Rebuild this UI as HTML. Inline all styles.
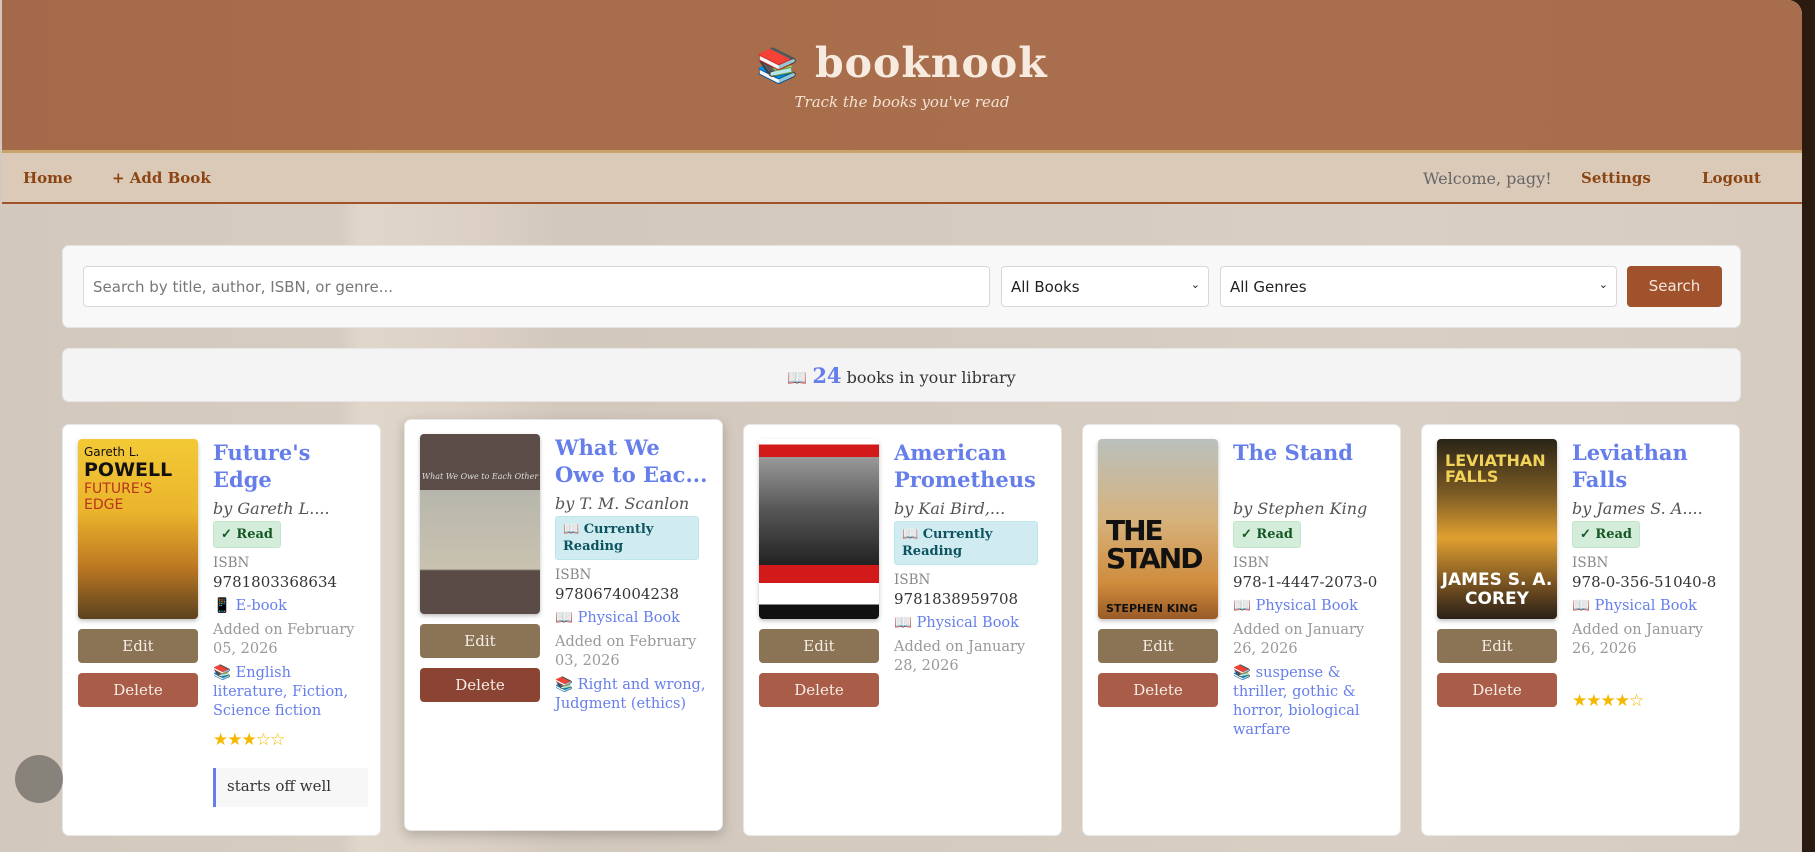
<!DOCTYPE html>
<html><head><meta charset="utf-8"><style>
*{box-sizing:border-box;margin:0;padding:0}
html,body{width:1815px;height:852px;overflow:hidden}
body{background:#2a1a10;font-family:"DejaVu Serif",serif;position:relative}
.page{position:absolute;left:0;top:0;width:1802px;height:852px;border-radius:0 14px 0 0;overflow:hidden;
background:linear-gradient(90deg,#d2c8bd 0,#d6ccc1 340px,#e0d6ca 360px,#dbd0c3 480px,#d3c8bc 560px,#d5cbc0 1000px,#d9cfc4 1400px,#d6ccc2 1802px)}
.header{position:absolute;left:2px;top:0;width:1800px;height:150px;background:linear-gradient(90deg,#a4694a,#a86d4c 400px,#a86e4d 1200px,#a86d4d);border-radius:0 14px 0 0}
.goldline{position:absolute;left:2px;top:150px;width:1800px;height:3px;background:#c9a468}
.logo{position:absolute;left:0;width:1804px;top:38px;text-align:center;color:#f7ebdf;font-weight:bold;font-size:41px;line-height:50px;letter-spacing:1px}
.sub{position:absolute;left:0;width:1804px;top:93px;text-align:center;color:#f3e3d3;font-style:italic;font-size:15px}
.nav{position:absolute;left:2px;top:153px;width:1800px;height:51px;background:#dccab9;border-bottom:2px solid #a0522d}
.nav span{position:absolute;top:16px;font-size:15px;font-weight:bold;color:#8b4513}
.panel{position:absolute;left:62px;width:1679px;border-radius:7px;border:1px solid #e5e5e5}
.search{top:245px;height:83px;background:#f8f8f8}
.inp{position:absolute;top:20px;height:41px;background:#fff;border:1px solid #d8d8d8;border-radius:4px;font-family:"DejaVu Sans",sans-serif;font-size:15px;padding:11px 9px;color:#222}
.stats{top:348px;height:54px;background:#f4f4f4;text-align:center;font-size:16px;line-height:54px;color:#333}
.card{position:absolute;top:424px;width:319px;height:412px;background:#fff;border-radius:7px;border:1px solid #e6e6e6}
.cover{position:absolute;left:15px;top:14px;width:120px;height:180px;border-radius:4px;overflow:hidden;box-shadow:0 2px 4px rgba(0,0,0,.25)}
.btn{position:absolute;left:15px;width:120px;height:34px;border-radius:4px;color:#f6eee6;font-size:15px;text-align:center;line-height:34px}
.edit{top:204px;background:#8b7355}.del{top:248px;background:#a95c48}
.info{position:absolute;left:150px;top:14px;width:152px}
.t{font-weight:bold;color:#667eea;font-size:21px;line-height:27px;height:56px;overflow:hidden;width:148px}
.a{font-style:italic;color:#555;font-size:16px;line-height:20px;white-space:nowrap;margin-top:4px}
.badge{display:inline-block;font-weight:bold;font-size:13px;line-height:17px;padding:4px 7px;border-radius:3px;margin-top:2px}
.rd{background:#d4edda;color:#155724;border:1px solid #c3e6cb}
.cr{background:#d1ecf1;color:#0c5460;border:1px solid #bee5eb;width:144px}
.l{color:#888;font-size:13.5px;margin-top:7px;line-height:17px}
.n{color:#333;font-size:15px;line-height:20px}
.f{color:#667eea;font-size:14.5px;line-height:20px;margin-top:4px}
.d{color:#999;font-size:14.5px;line-height:19px;margin-top:5px}
.g{color:#667eea;font-size:14.5px;line-height:19px;margin-top:5px}
.s{color:#f5b800;font-size:17px;margin-top:9px;letter-spacing:-1px}
.note{margin-top:18px;background:#f7f7f7;border-left:3px solid #667eea;padding:9px 11px;font-size:15px;color:#333;height:39px;width:155px}
</style></head><body>
<div class="page">
<div class="header"></div>
<div class="goldline"></div>
<div class="logo"><span style="font-family:'DejaVu Sans';font-size:34px">📚</span> booknook</div>
<div class="sub">Track the books you've read</div>
<div class="nav">
<span style="left:21px">Home</span><span style="left:110px">+ Add Book</span>
<span style="left:1421px;font-weight:normal;color:#666;font-size:16px">Welcome, pagy!</span>
<span style="left:1579px">Settings</span><span style="left:1700px">Logout</span>
</div>
<div class="panel search">
<div class="inp" style="left:20px;width:907px;color:#777">Search by title, author, ISBN, or genre...</div>
<div class="inp" style="left:938px;width:208px">All Books<span style="position:absolute;right:8px;font-size:11px">⌄</span></div>
<div class="inp" style="left:1157px;width:397px">All Genres<span style="position:absolute;right:8px;font-size:11px">⌄</span></div>
<div style="position:absolute;left:1564px;top:20px;width:95px;height:41px;background:#a0522d;border-radius:4px;color:#f4e6dc;font-family:'DejaVu Sans',sans-serif;font-size:15px;text-align:center;line-height:41px">Search</div>
</div>
<div class="panel stats">📖 <b style="color:#667eea;font-size:21px">24</b> books in your library</div>

<div class="card" style="left:62px">
<div class="cover" style="background:linear-gradient(180deg,#f3c935 0,#eab52c 40%,#c07a22 70%,#5a4220 100%)"><div style="padding:6px 6px;font-family:'DejaVu Sans';font-size:12px;color:#111;line-height:14px">Gareth L.<br><b style="font-size:19px;line-height:22px">POWELL</b><br><span style="color:#b8341e;font-size:14px;line-height:16px">FUTURE'S<br>EDGE</span></div></div>
<div class="btn edit">Edit</div><div class="btn del">Delete</div>
<div class="info"><div class="t">Future's<br>Edge</div><div class="a">by Gareth L....</div><span class="badge rd">✓ Read</span>
<div class="l">ISBN</div><div class="n">9781803368634</div><div class="f">📱 E-book</div><div class="d">Added on February 05, 2026</div><div class="g">📚 English<br>literature, Fiction, Science fiction</div><div class="s">★★★☆☆</div><div class="note">starts off well</div></div>
</div>

<div class="card" style="left:404px;top:419px;box-shadow:0 4px 12px rgba(0,0,0,.2)">
<div class="cover" style="background:linear-gradient(180deg,#5c4c48 0,#5c4c48 31%,#b7b6ac 31%,#c9c2b0 75%,#5a4b47 76%)"><div style="font-style:italic;color:#ddd;font-size:8px;text-align:center;margin-top:38px;white-space:nowrap">What We Owe to Each Other</div></div>
<div class="btn edit">Edit</div><div class="btn del" style="background:#8b4433">Delete</div>
<div class="info"><div class="t" style="width:160px">What We<br>Owe to Eac...</div><div class="a">by T. M. Scanlon</div><span class="badge cr">📖 Currently Reading</span>
<div class="l">ISBN</div><div class="n">9780674004238</div><div class="f">📖 Physical Book</div><div class="d">Added on February 03, 2026</div><div class="g" style="width:160px">📚 Right and wrong, Judgment (ethics)</div></div>
</div>

<div class="card" style="left:743px">
<div class="cover" style="background:linear-gradient(180deg,#fff 0,#fff 3%,#d21a1a 3%,#d21a1a 10%,#999 10%,#555 40%,#222 70%,#d21a1a 70%,#d21a1a 80%,#fff 80%,#fff 92%,#111 92%)"></div>
<div class="btn edit">Edit</div><div class="btn del">Delete</div>
<div class="info"><div class="t">American Prometheus</div><div class="a">by Kai Bird,...</div><span class="badge cr">📖 Currently Reading</span>
<div class="l">ISBN</div><div class="n">9781838959708</div><div class="f">📖 Physical Book</div><div class="d">Added on January<br>28, 2026</div></div>
</div>

<div class="card" style="left:1082px">
<div class="cover" style="background:linear-gradient(180deg,#b9c0bd 0,#d6b27c 45%,#cf8c3d 80%,#9a5a26 100%)"><div style="position:absolute;top:78px;left:8px;font-family:'DejaVu Sans';font-weight:bold;font-size:28px;line-height:28px;color:#111;letter-spacing:-2px">THE<br>STAND</div><div style="position:absolute;bottom:4px;left:8px;font-family:'DejaVu Sans';font-weight:bold;font-size:11px;color:#111">STEPHEN KING</div></div>
<div class="btn edit">Edit</div><div class="btn del">Delete</div>
<div class="info"><div class="t">The Stand</div><div class="a">by Stephen King</div><span class="badge rd">✓ Read</span>
<div class="l">ISBN</div><div class="n">978-1-4447-2073-0</div><div class="f">📖 Physical Book</div><div class="d">Added on January<br>26, 2026</div><div class="g">📚 suspense &amp; thriller, gothic &amp; horror, biological warfare</div></div>
</div>

<div class="card" style="left:1421px">
<div class="cover" style="background:linear-gradient(180deg,#2a2418 0,#7b5a24 30%,#e0a030 55%,#7a5422 80%,#2a2018 100%)"><div style="position:absolute;top:14px;left:8px;font-family:'DejaVu Sans';font-weight:bold;font-size:16px;line-height:16px;color:#f1d35a">LEVIATHAN<br>FALLS</div><div style="position:absolute;bottom:10px;left:0;font-family:'DejaVu Sans';font-weight:bold;font-size:17px;color:#fff;line-height:19px;text-align:center;width:120px;white-space:nowrap">JAMES S. A.<br>COREY</div></div>
<div class="btn edit">Edit</div><div class="btn del">Delete</div>
<div class="info"><div class="t">Leviathan Falls</div><div class="a">by James S. A....</div><span class="badge rd">✓ Read</span>
<div class="l">ISBN</div><div class="n">978-0-356-51040-8</div><div class="f">📖 Physical Book</div><div class="d">Added on January<br>26, 2026</div><div class="s" style="margin-top:32px">★★★★☆</div></div>
</div>

<div style="position:absolute;left:15px;top:755px;width:48px;height:48px;border-radius:50%;background:rgba(110,105,100,.75)"></div>
</div>
</body></html>
